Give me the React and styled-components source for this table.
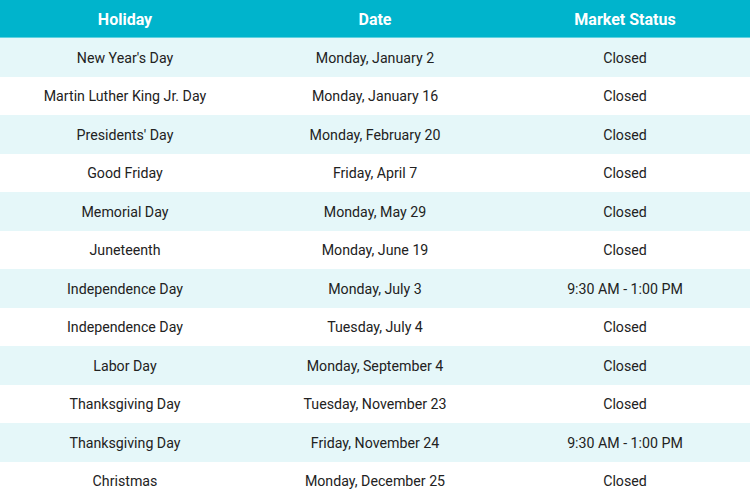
import React from 'react';
import styled, { createGlobalStyle } from 'styled-components';

const GlobalStyle = createGlobalStyle`
  html, body {
    margin: 0;
    padding: 0;
    background: #ffffff;
  }
  body {
    font-family: Roboto, "Liberation Sans", sans-serif;
  }
`;

const Table = styled.div`
  width: 750px;
  display: flex;
  flex-direction: column;
`;

const Row = styled.div`
  display: grid;
  grid-template-columns: repeat(3, 1fr);
  height: ${props => (props.header ? '38px' : '38.5px')};
  background: ${props =>
    props.header ? '#00b4cc' : props.striped ? '#e5f7f9' : '#ffffff'};
  box-shadow: ${props => (props.header ? 'inset 0 -1px 0 #5fd2e0' : 'none')};
`;

const Cell = styled.div`
  display: flex;
  align-items: center;
  justify-content: center;
  padding-top: ${props => (props.header ? '0' : '1px')};
  font-size: ${props => (props.header ? '16px' : '14.2px')};
  font-weight: ${props => (props.header ? 700 : 400)};
  color: ${props => (props.header ? '#ffffff' : '#222222')};
  white-space: nowrap;
`;

const holidays = [
  ["New Year's Day", 'Monday, January 2', 'Closed'],
  ['Martin Luther King Jr. Day', 'Monday, January 16', 'Closed'],
  ["Presidents' Day", 'Monday, February 20', 'Closed'],
  ['Good Friday', 'Friday, April 7', 'Closed'],
  ['Memorial Day', 'Monday, May 29', 'Closed'],
  ['Juneteenth', 'Monday, June 19', 'Closed'],
  ['Independence Day', 'Monday, July 3', '9:30 AM - 1:00 PM'],
  ['Independence Day', 'Tuesday, July 4', 'Closed'],
  ['Labor Day', 'Monday, September 4', 'Closed'],
  ['Thanksgiving Day', 'Tuesday, November 23', 'Closed'],
  ['Thanksgiving Day', 'Friday, November 24', '9:30 AM - 1:00 PM'],
  ['Christmas', 'Monday, December 25', 'Closed'],
];

export default function App() {
  return (
    <>
      <GlobalStyle />
      <Table>
        <Row header>
          <Cell header>Holiday</Cell>
          <Cell header>Date</Cell>
          <Cell header>Market Status</Cell>
        </Row>
        {holidays.map((h, i) => (
          <Row key={i} striped={i % 2 === 0}>
            <Cell>{h[0]}</Cell>
            <Cell>{h[1]}</Cell>
            <Cell>{h[2]}</Cell>
          </Row>
        ))}
      </Table>
    </>
  );
}
